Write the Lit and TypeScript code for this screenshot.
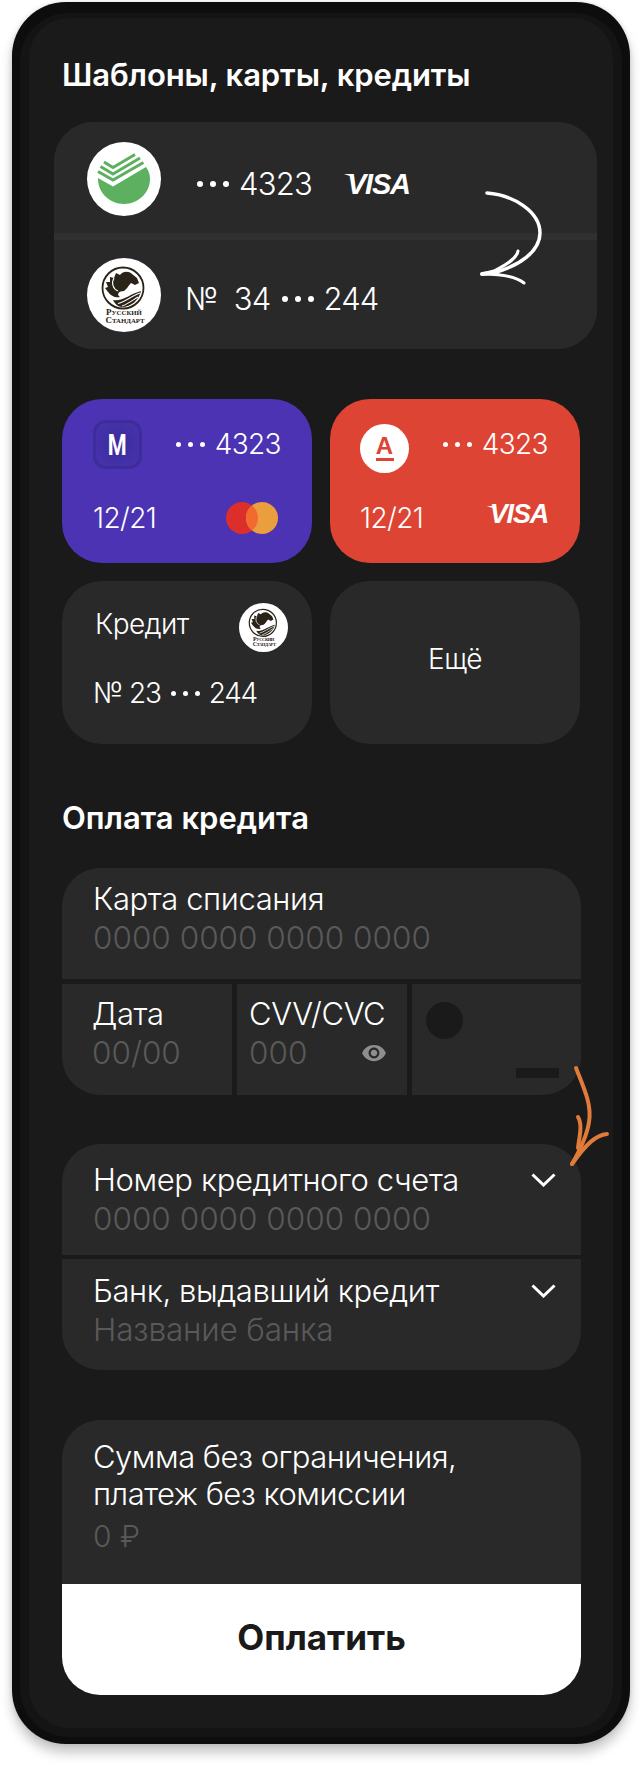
import { LitElement, html, css, svg } from "lit";
import { customElement } from "lit/decorators.js";

const dots = (cls = "") => html`<span class="dots ${cls}"><i></i><i></i><i></i></span>`;

const sber = html`<svg class="logo" viewBox="0 0 74 74">
  <circle cx="37" cy="37" r="37" fill="#fff"/>
  <path d="M11 36 L26 44.5 L59 25 C62 29 63 33 63 37 C63 51 51 62 37 62 C23 62 11 51 11 37Z" fill="#5cb060"/>
  <g fill="none" stroke="#5cb060" stroke-width="3">
    <path d="M17 20 L26 25.5 L48 12.5"/>
    <path d="M13.5 24.5 L26 32 L53 16"/>
    <path d="M11 29.5 L26 38 L56.500 20.500"/>
  </g>
</svg>`;

const rs = (cls: string) => html`<svg class=${cls} viewBox="0 0 74 74">
  <circle cx="37" cy="37" r="37" fill="#fff"/>
  <circle cx="36" cy="30" r="20.500" fill="#fff" stroke="#2a2318" stroke-width="1.800"/>
  <path d="M21 34 L18 30 L21 29 L19 24 L23 24 L23 19 L27 20 L29 15 L33 17 C36 13 42 13 45 16 L50 20 L52 25 L48 27 L44 25 C41 28 40 31 37 33 C32 33 29 36 33 39 C28 40 24 38 21 34Z" fill="#2a2318"/>
  <path d="M26 42 C35 44 43 36 54 33 C52 42 44 49 35 49 C31 49 28 46 26 42Z" fill="#2a2318"/>
  <g fill="none" stroke="#fff" stroke-width="1.100">
    <path d="M31 45.500 C37 44 45 38 53 35"/>
    <path d="M35 48 C41 46 46 42 51 39"/>
    <path d="M27 20 C24 25 26 31 31 33"/>
  </g>
  <text x="37" y="57" class="rs-text"><tspan class="rs-cap">Р</tspan>УССКИЙ</text>
  <text x="38" y="65" class="rs-text"><tspan class="rs-cap">С</tspan>ТАНДАРТ</text>
</svg>`;

const eye = html`<svg class="eye" viewBox="0 0 24 24"><path fill="#8e8e8e" d="M12 4.500C7 4.500 2.730 7.610 1 12c1.730 4.390 6 7.500 11 7.500s9.270-3.110 11-7.500c-1.730-4.390-6-7.500-11-7.500zM12 17c-2.760 0-5-2.240-5-5s2.240-5 5-5 5 2.240 5 5-2.240 5-5 5zm0-8c-1.660 0-3 1.340-3 3s1.340 3 3 3 3-1.340 3-3-1.340-3-3-3z"/></svg>`;

const chev = html`<svg class="chev" viewBox="0 0 25 14"><path d="M1.500 1.500 L12.500 12 L23.500 1.500" fill="none" stroke="#fff" stroke-width="3"/></svg>`;

const mastercard = html`<svg class="mc" viewBox="0 0 52 32">
  <circle cx="16" cy="16" r="16" fill="#dc2f2c"/>
  <circle cx="36" cy="16" r="16" fill="#eb9e3e"/>
  <path d="M26 3.500 A16 16 0 0 1 26 28.500 A16 16 0 0 1 26 3.500Z" fill="#f26a2e"/>
</svg>`;

const arrows = svg`
  <g fill="none" stroke-linecap="round" stroke-linejoin="round">
    <g stroke="#fff">
      <path stroke-width="3.500" d="M487 193 C514 195 540 212 540 233 C540 252 518 266 496 272"/>
      <path stroke-width="4" d="M482 274 L498 272"/>
      <path stroke-width="3" d="M518 251 C517 258 508 264 494 271 L482 274"/>
      <path stroke-width="3" d="M482 274 C500 274 515 276 524 283"/>
    </g>
    <g stroke="#e07b39">
      <path stroke-width="4" d="M576 1068 C584 1088 592 1105 589 1122 C587 1136 580 1150 572 1164"/>
      <path stroke-width="4" d="M578 1117 C583 1125 579 1138 578 1148"/>
      <path stroke-width="4" d="M607 1134 C596 1135 586 1144 572 1164"/>
    </g>
  </g>`;

@customElement("app-root")
export class AppRoot extends LitElement {
  static styles = css`
    :host { display: block; position: relative; width: 640px; height: 1767px; background: #fff; overflow: hidden;
      font-family: Inter, "Noto Sans", sans-serif; color: #fff; padding-top: 2px; box-sizing: border-box; }
    .phone { margin-left: 12px; width: 618px; height: 1742px; box-sizing: border-box; padding: 11px 8px 7px;
      background: #0d0d0d; border-radius: 54px; box-shadow: 0 9px 12px rgba(0,0,0,.22), 0 0 5px rgba(0,0,0,.12); }
    .bezel { height: 100%; box-sizing: border-box; padding: 5px 9px 9px 9px; background: #141414; border-radius: 48px; }
    .screen { height: 100%; box-sizing: border-box; background: #1a1a1a; border-radius: 40px; padding-top: 39px; overflow: hidden; }
    h2 { margin: 0 0 0 33px; font-size: 31px; line-height: 36px; font-weight: 600; letter-spacing: -.1px; }
    .templates { margin: 29px 0 0 25px; width: 543px; height: 227px; border-radius: 40px;
      overflow: hidden; display: flex; flex-direction: column; gap: 7px; background: #303030; }
    .trow { flex: 1; background: #292929; display: flex; align-items: flex-start; padding-left: 33px; }
    .trow.a { padding-top: 20px; }
    .trow.b { padding-top: 18px; }
    .logo { width: 74px; height: 74px; flex: none; }
    .tnum { display: flex; align-items: center; font-size: 31px; line-height: 40px; font-weight: 300; letter-spacing: -.8px; }
    .a .tnum { margin: 22px 0 0 36px; }
    .b .tnum { margin: 21px 0 0 24px; }
    .dots { display: inline-flex; gap: 7px; margin: 0 10px 0 0; }
    .dots i { width: 6px; height: 6px; border-radius: 50%; background: #fff; display: block; }
    .dots.mid { margin: 0 9px 0 12px; }
    .small .dots { gap: 7px; }
    .small .dots i { width: 5px; height: 5px; }
    .small .dots.mid { margin: 0 9px 0 10px; }
    .visa { position: relative; font-family: "Liberation Sans", sans-serif; font-weight: 700; font-style: italic;
      font-size: 29px; line-height: 32px; letter-spacing: -1.200px; color: #fff; }
    .visa::before { content: ""; position: absolute; left: -3px; top: 6px; width: 9px; height: 3px;
      background: #fff; clip-path: polygon(0 0, 100% 0, 100% 100%); }
    .a .visa { margin: 26px 0 0 35px; }
    .grid { margin: 50px 0 0 33px; width: 518px; display: grid; grid-template-columns: 250px 250px; grid-template-rows: 164px 163px; gap: 18px; }
    .card { border-radius: 40px; box-sizing: border-box; display: flex; flex-direction: column; justify-content: space-between; background: #292929; font-weight: 300; }
    .small { font-size: 28px; line-height: 34px; letter-spacing: -.6px; }
    .purple { background: #4b33b3; padding: 21px 31px 28px 31px; }
    .red { background: #de4433; padding: 21px 32px 28px 30px; }
    .tr { display: flex; justify-content: space-between; align-items: flex-start; }
    .br { display: flex; justify-content: space-between; align-items: center; }
    .num { display: flex; align-items: center; line-height: 49px; }
    .micon { width: 49px; height: 49px; box-sizing: border-box; border: 3px solid #3d2d9a; border-radius: 13px;
      background: radial-gradient(circle, #3d2da0 20%, #4733ab 90%); display: flex; align-items: center; justify-content: center;
      font-family: Roboto, sans-serif; font-weight: 700; font-size: 30px; line-height: 1; letter-spacing: 0; }
    .micon span { display: block; transform: scaleX(.72); }
    .mc { width: 52px; height: 32px; margin-right: 3px; flex: none; }
    .alfa { width: 49px; height: 49px; margin-top: 4px; border-radius: 50%; background: #fff; color: #de4433; display: flex; flex-direction: column; align-items: center; justify-content: center;
      font-family: "Liberation Sans", sans-serif; font-weight: 700; font-size: 24px; line-height: 19px; letter-spacing: 0; }
    .alfa b { display: block; width: 18px; height: 3px; background: #de4433; margin-top: 3px; }
    .red .visa { font-size: 27px; line-height: 28px; margin-top: -8px; letter-spacing: -1.200px; }
    .credit { padding: 22px 24px 36px 31px; }
    .credit .tr span { line-height: 42px; margin-left: 2px; }
    .credit .num { line-height: 30px; letter-spacing: -1.200px; }
    .rs-small { width: 49px; height: 49px; flex: none; }
    .rs-text { font-family: "Liberation Serif", serif; font-weight: 700; font-size: 6.800px; fill: #2a2318; text-anchor: middle; }
    .rs-cap { font-size: 9px; }
    .more { align-items: center; justify-content: center; padding-bottom: 8px; }
    .form { width: 519px; margin-left: 33px; border-radius: 38px; overflow: hidden; display: flex; flex-direction: column; }
    .form1 { margin-top: 32px; gap: 5px; }
    h2.second { margin-top: 56px; letter-spacing: 0; }
    .field { background: #292929; font-size: 31px; letter-spacing: -.4px; line-height: 39px; font-weight: 300; box-sizing: border-box; height: 111px; }
    .ph { color: #595959; font-size: 31.500px; letter-spacing: 0; }
    .f-top { padding: 11px 31px 0; }
    .cells { display: grid; grid-template-columns: 170px 170px 169px; gap: 5px; }
    .cell-a { padding: 10px 0 0 30px; }
    .cell-b { padding: 10px 0 0 12px; }
    .phrow { display: flex; justify-content: space-between; align-items: center; }
    .eye { width: 26px; height: 26px; }
    .cell-b .phrow { padding-right: 20px; }
    .cell-c { display: flex; flex-direction: column; }
    .hole { width: 37px; height: 37px; border-radius: 50%; background: #1a1a1a; margin: 18px 0 0 14px; }
    .slot { width: 43px; height: 10px; background: #1a1a1a; margin: auto 22px 17px auto; }
    .form2 { margin-top: 49px; gap: 4px; }
    .select { padding: 0 25px 0 31px; }
    .select.t { padding-top: 16px; }
    .select.u { padding-top: 12px; }
    .select.u .ph { letter-spacing: -.15px; }
    .lbl { display: flex; justify-content: space-between; align-items: center; }
    .chev { width: 25px; height: 14px; }
    .form3 { margin-top: 50px; }
    .sum { height: 164px; background: #292929; box-sizing: border-box; padding: 18px 31px 0; font-size: 31px; letter-spacing: -.5px; line-height: 37px; font-weight: 300; }
    .sum .ph { margin-top: 6px; font-size: 30px; }
    .pay { height: 111px; box-sizing: border-box; padding-bottom: 5px; background: #fff; color: #1a1a1a; font-size: 35px; font-weight: 700; display: flex; align-items: center; justify-content: center; }
    .overlay { position: absolute; left: 0; top: 0; width: 640px; height: 1767px; pointer-events: none; }
  `;

  render() {
    return html`
      <div class="phone"><div class="bezel"><div class="screen">
        <h2>Шаблоны, карты, кредиты</h2>
        <section class="templates">
          <div class="trow a">${sber}<div class="tnum">${dots()}4323</div><span class="visa">VISA</span></div>
          <div class="trow b">${rs("logo")}<div class="tnum">№&nbsp;&nbsp;34${dots("mid")}244</div></div>
        </section>
        <section class="grid">
          <div class="card small purple">
            <div class="tr"><div class="micon"><span>M</span></div><div class="num">${dots()}4323</div></div>
            <div class="br"><span>12/21</span>${mastercard}</div>
          </div>
          <div class="card small red">
            <div class="tr"><div class="alfa">А<b></b></div><div class="num">${dots()}4323</div></div>
            <div class="br"><span>12/21</span><span class="visa">VISA</span></div>
          </div>
          <div class="card small credit">
            <div class="tr"><span>Кредит</span>${rs("rs-small")}</div>
            <div class="num">№ 23${dots("mid")}244</div>
          </div>
          <div class="card small more">Ещё</div>
        </section>
        <h2 class="second">Оплата кредита</h2>
        <section class="form form1">
          <div class="field f-top"><div>Карта списания</div><div class="ph">0000 0000 0000 0000</div></div>
          <div class="cells">
            <div class="field cell-a"><div>Дата</div><div class="ph">00/00</div></div>
            <div class="field cell-b"><div>CVV/CVC</div><div class="phrow"><span class="ph">000</span>${eye}</div></div>
            <div class="field cell-c"><div class="hole"></div><div class="slot"></div></div>
          </div>
        </section>
        <section class="form form2">
          <div class="field select t"><div class="lbl"><span>Номер кредитного счета</span>${chev}</div><div class="ph">0000 0000 0000 0000</div></div>
          <div class="field select u"><div class="lbl"><span>Банк, выдавший кредит</span>${chev}</div><div class="ph">Название банка</div></div>
        </section>
        <section class="form form3">
          <div class="sum"><div>Сумма без ограничения,<br>платеж без комиссии</div><div class="ph">0 ₽</div></div>
          <div class="pay">Оплатить</div>
        </section>
      </div></div></div>
      <svg class="overlay" viewBox="0 0 640 1767">${arrows}</svg>
    `;
  }
}
